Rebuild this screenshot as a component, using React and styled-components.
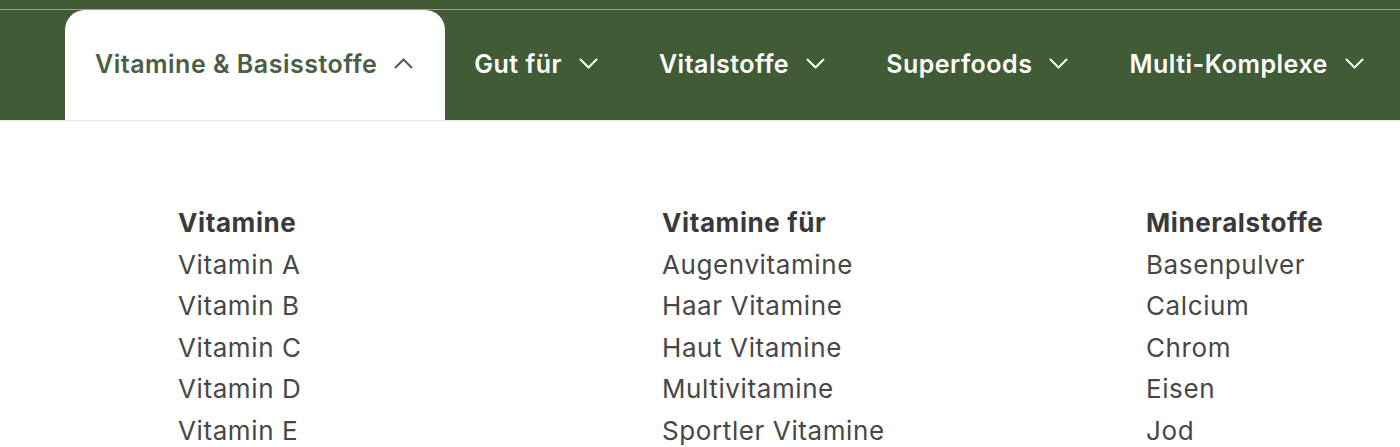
import styled, { createGlobalStyle } from "styled-components";

const GlobalStyle = createGlobalStyle`
  body {
    margin: 0;
    background: #fff;
    font-family: "Inter", "Open Sans", sans-serif;
    overflow: hidden;
  }
`;

const Header = styled.header`
  background: #425b37;
  padding-top: 9px;
  border-bottom: 1px solid #e6e6e6;
`;

const TopLine = styled.div`
  height: 1px;
  background: #93a88c;
`;

const Nav = styled.nav`
  display: flex;
  height: 110px;
  padding-left: 65px;
  overflow: hidden;
`;

const NavItem = styled.div`
  display: flex;
  flex-shrink: 0;
  align-items: center;
  gap: 17px;
  padding: ${({ active }) => (active ? "0 32px 3px 30px" : "0 32px 3px 29px")};
  font-size: 25px;
  font-weight: 600;
  letter-spacing: 0.5px;
  white-space: nowrap;
  color: ${({ active }) => (active ? "#4a5e45" : "#fff")};
  background: ${({ active }) => (active ? "#fff" : "transparent")};
  border-radius: 20px 20px 0 0;
`;

const Chevron = ({ up }) => (
  <svg width="19" height="11" viewBox="0 0 19 11" fill="none">
    <path
      d={up ? "M1.5 9.5 L9.5 1.5 L17.5 9.5" : "M1.5 1.5 L9.5 9.5 L17.5 1.5"}
      stroke="currentColor"
      strokeWidth="2"
      strokeLinecap="round"
      strokeLinejoin="round"
    />
  </svg>
);

const Menu = styled.div`
  display: grid;
  grid-template-columns: repeat(3, 484px);
  padding: 81px 0 0 178px;
`;

const Column = styled.div`
  display: flex;
  flex-direction: column;
`;

const ColumnTitle = styled.div`
  font-size: 26px;
  font-weight: 700;
  letter-spacing: 0.6px;
  color: #3a3a3a;
  line-height: 41.5px;
  white-space: nowrap;
`;

const ColumnLink = styled.a`
  font-size: 26px;
  font-weight: 400;
  letter-spacing: 0.6px;
  color: #474747;
  line-height: 41.5px;
  text-decoration: none;
  white-space: nowrap;
`;

const navItems = ["Gut für", "Vitalstoffe", "Superfoods", "Multi-Komplexe"];

const columns = [
  {
    title: "Vitamine",
    links: ["Vitamin A", "Vitamin B", "Vitamin C", "Vitamin D", "Vitamin E"],
  },
  {
    title: "Vitamine für",
    links: [
      "Augenvitamine",
      "Haar Vitamine",
      "Haut Vitamine",
      "Multivitamine",
      "Sportler Vitamine",
    ],
  },
  {
    title: "Mineralstoffe",
    links: ["Basenpulver", "Calcium", "Chrom", "Eisen", "Jod"],
  },
];

export default function App() {
  return (
    <>
      <GlobalStyle />
      <Header>
        <TopLine />
        <Nav>
          <NavItem active>
            Vitamine &amp; Basisstoffe
            <Chevron up />
          </NavItem>
          {navItems.map((item) => (
            <NavItem key={item}>
              {item}
              <Chevron />
            </NavItem>
          ))}
        </Nav>
      </Header>
      <Menu>
        {columns.map((col) => (
          <Column key={col.title}>
            <ColumnTitle>{col.title}</ColumnTitle>
            {col.links.map((link) => (
              <ColumnLink href="#" key={link}>
                {link}
              </ColumnLink>
            ))}
          </Column>
        ))}
      </Menu>
    </>
  );
}
